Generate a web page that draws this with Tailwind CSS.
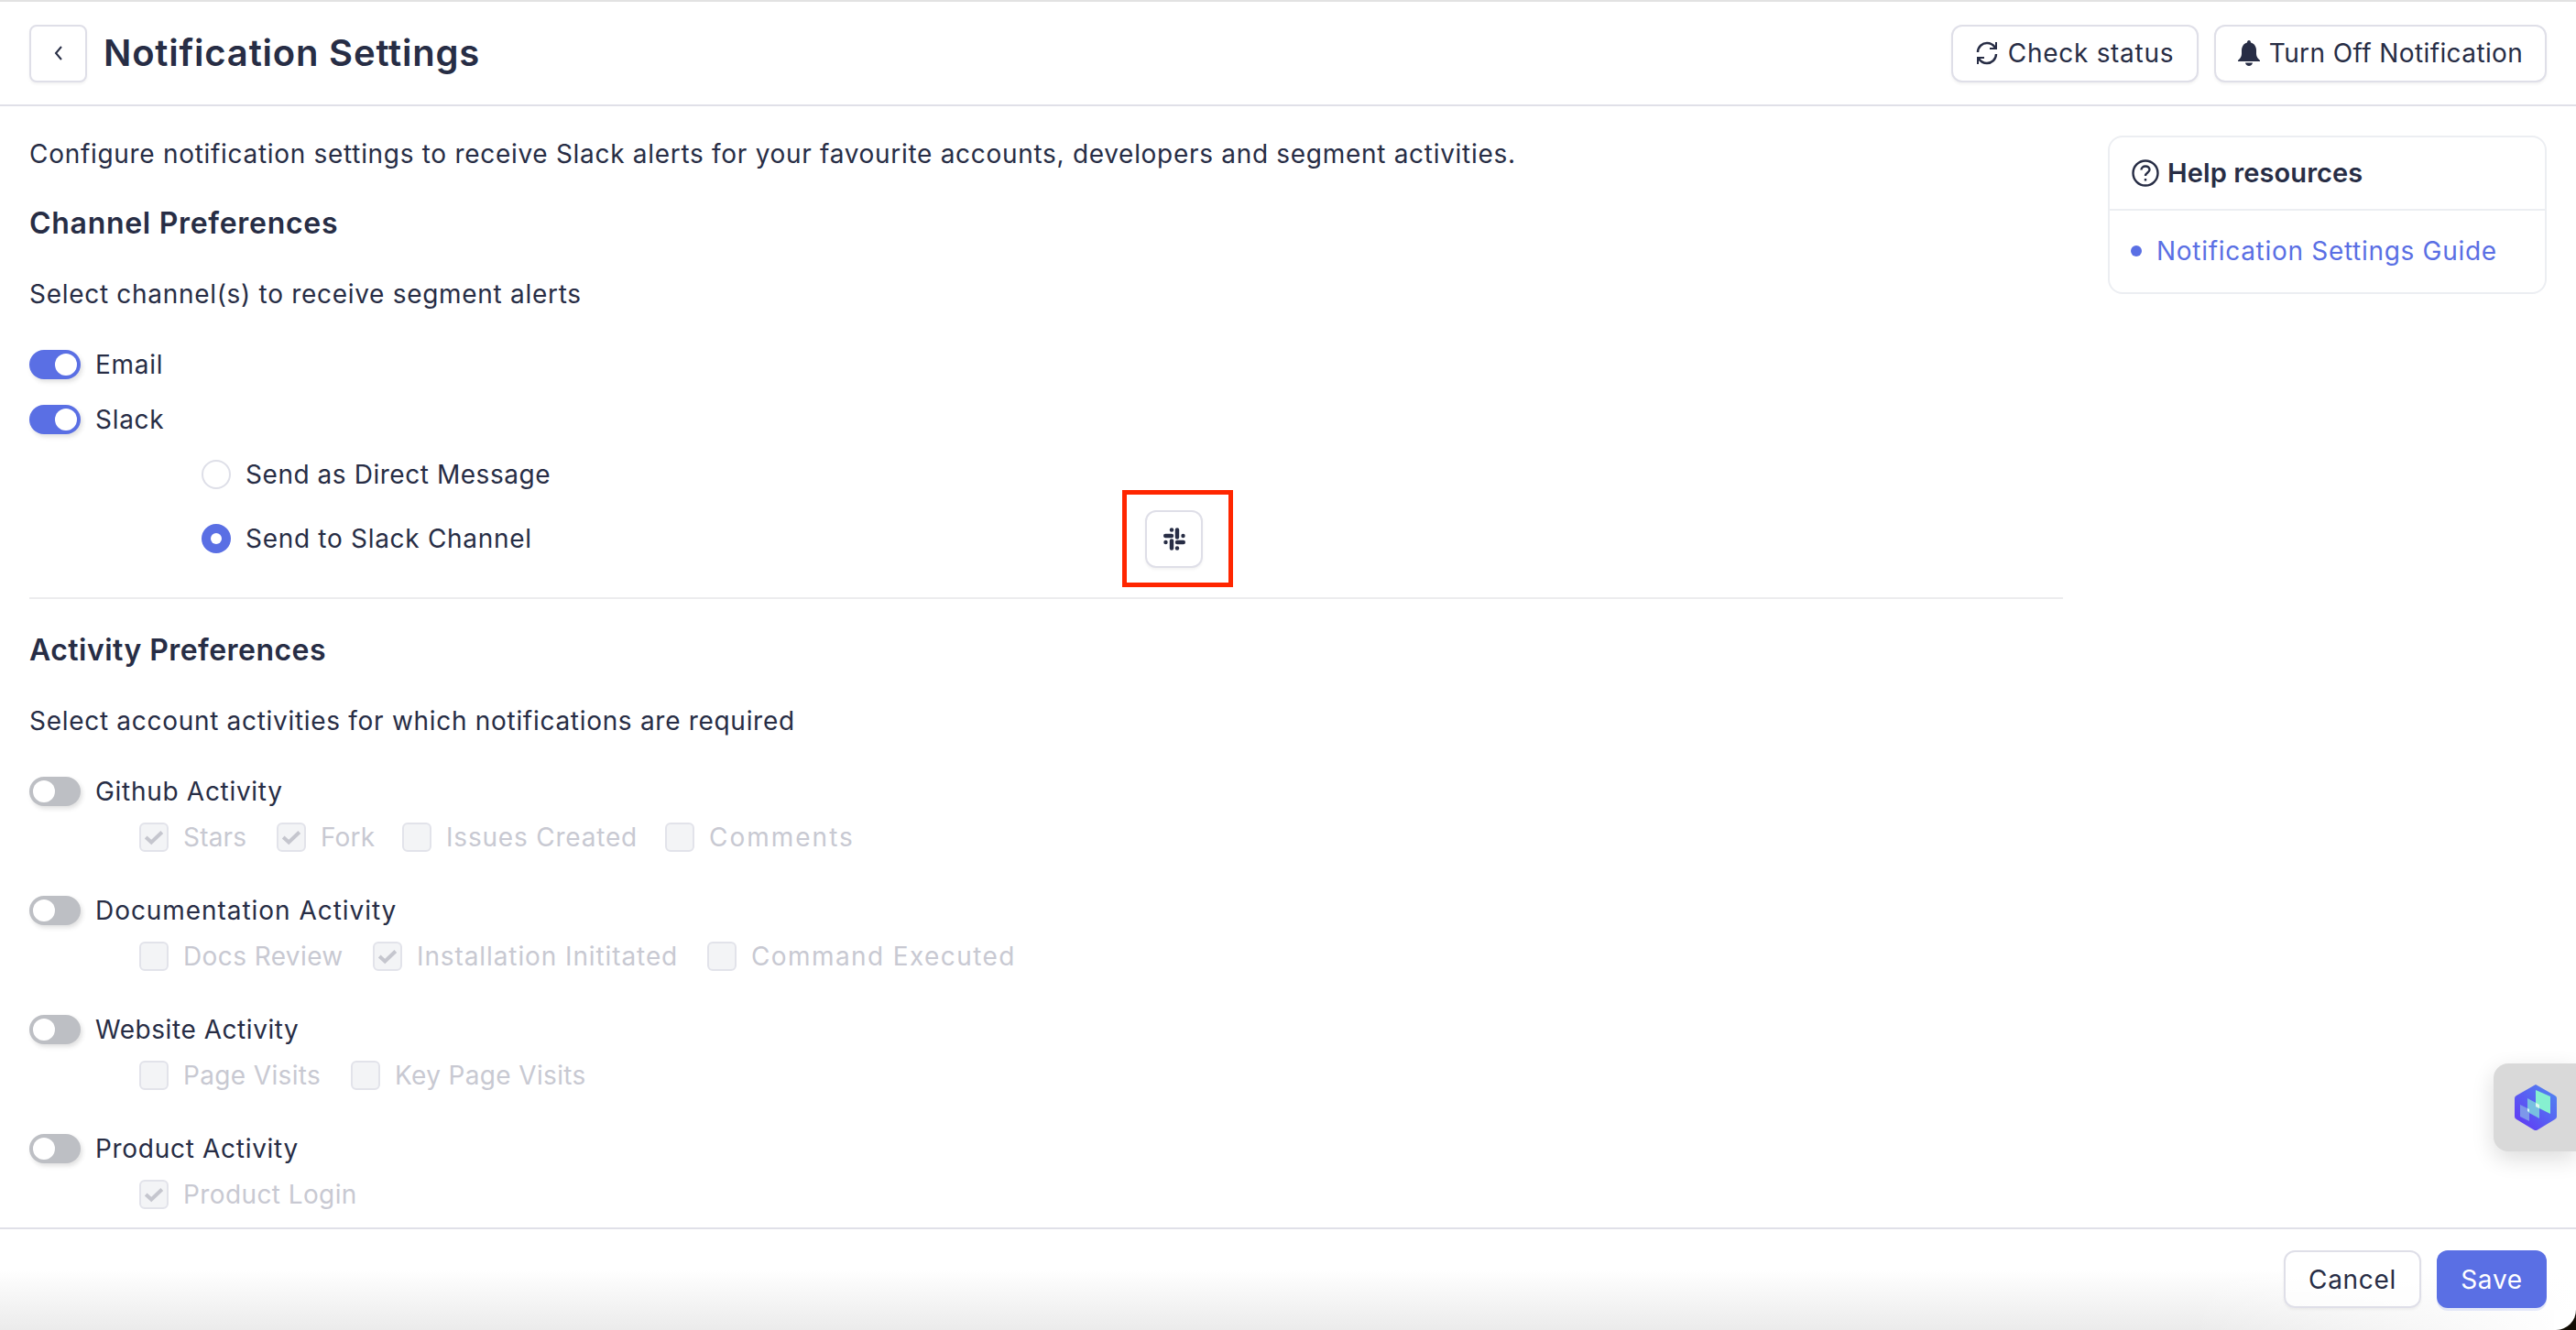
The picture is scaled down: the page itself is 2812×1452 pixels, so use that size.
<!DOCTYPE html>
<html lang="en">
<head>
    <meta charset="UTF-8">
    <title>Notification Settings</title>
    <script src="https://cdn.jsdelivr.net/npm/@tailwindcss/browser@4"></script>
</head>
<body class="bg-white font-[Inter,sans-serif] text-[#272d45] text-[28px] leading-[40px] tracking-[0.7px]">
<div class="relative h-[1452px] w-[2812px] overflow-hidden flex flex-col border-t-2 border-[#e2e2e2]">

    <!-- header -->
    <header class="h-[114px] shrink-0 flex items-center justify-between pl-8 pr-8 border-b-2 border-[#e0e0e8]">
        <div class="flex items-center gap-[18px]">
            <button class="w-[63px] h-[63px] flex items-center justify-center bg-white border-2 border-[#dfdfe8] rounded-lg shadow-[0_2px_3px_rgba(0,0,0,0.05)]">
                <svg class="w-4 h-5" viewBox="0 0 16 20" fill="none" stroke="#272d45" stroke-width="2"><path d="M11 3 L5 10 L11 17"/></svg>
            </button>
            <h1 class="text-[40px] font-semibold tracking-[0.8px]">Notification Settings</h1>
        </div>
        <div class="flex items-center gap-[17px]">
            <button class="w-[270px] h-[63px] flex items-center justify-center gap-[11px] bg-white border-2 border-[#dfdfe8] rounded-[12px] shadow-[0_2px_3px_rgba(0,0,0,0.05)]">
                <svg class="w-6 h-7" viewBox="0 0 24 28" fill="none" stroke="#272d45" stroke-width="2.4"><path d="M2 13 C2 7 7 3 12 3 C16 3 19 5 21 8"/><path d="M22 2 V9 H15" stroke-width="2"/><path d="M22 15 C22 21 17 25 12 25 C8 25 5 23 3 20"/><path d="M2 26 V19 H9" stroke-width="2"/></svg>
                <span>Check status</span>
            </button>
            <button class="w-[363px] h-[63px] flex items-center justify-center gap-[10px] bg-white border-2 border-[#dfdfe8] rounded-[12px] shadow-[0_2px_3px_rgba(0,0,0,0.05)]">
                <svg class="w-6 h-7" viewBox="0 0 24 28" fill="#272d45"><path d="M12 0 C13.4 0 14 1 14 2.4 C18 3.4 20 7 20 11 V15 C20 18 22 20 24 22 V23 H0 V22 C2 20 4 18 4 15 V11 C4 7 6 3.4 10 2.4 C10 1 10.6 0 12 0 Z"/><path d="M8 24.5 H16 C15.6 26.6 14 28 12 28 C10 28 8.4 26.6 8 24.5 Z"/></svg>
                <span class="tracking-[0.4px]">Turn Off Notification</span>
            </button>
        </div>
    </header>

    <!-- body -->
    <main class="relative h-[1224px] shrink-0 flex justify-between pl-8 pr-8">
        <div class="w-[2220px]">
            <p class="mt-8">Configure notification settings to receive Slack alerts for your favourite accounts, developers and segment activities.</p>
            <h2 class="mt-9 text-[32px] font-semibold tracking-[0.7px]">Channel Preferences</h2>
            <p class="mt-[37px]">Select channel(s) to receive segment alerts</p>

            <div class="mt-[41px] flex items-center gap-4 h-8">
                <span class="relative w-14 h-8 rounded-full bg-[#5a6fe4] shadow-[2px_3px_5px_rgba(0,0,0,0.12)]"><span class="absolute right-1 top-1 w-6 h-6 rounded-full bg-white"></span></span>
                <span>Email</span>
            </div>
            <div class="mt-7 flex items-center gap-4 h-8">
                <span class="relative w-14 h-8 rounded-full bg-[#5a6fe4] shadow-[2px_3px_5px_rgba(0,0,0,0.12)]"><span class="absolute right-1 top-1 w-6 h-6 rounded-full bg-white"></span></span>
                <span>Slack</span>
            </div>
            <div class="mt-7 ml-[188px] flex items-center gap-4 h-8">
                <span class="w-8 h-8 rounded-full bg-white border-2 border-[#dedfe8]"></span>
                <span class="tracking-[0.55px]">Send as Direct Message</span>
            </div>
            <div class="mt-[38px] ml-[188px] flex items-center h-8">
                <span class="w-8 h-8 rounded-full bg-[#5a6fe4] flex items-center justify-center"><span class="w-3 h-3 rounded-full bg-white"></span></span>
                <span class="ml-4 w-[982px]">Send to Slack Channel</span>
                <button class="w-[63px] h-[63px] shrink-0 flex items-center justify-center bg-white border-2 border-[#dfdfe8] rounded-[12px] shadow-[0_2px_3px_rgba(0,0,0,0.05)]">
                    <svg class="w-6 h-[25px]" viewBox="0 0 24 25" fill="none" stroke="#272d45" stroke-width="4.4" stroke-linecap="round"><path d="M2.2 9 H9"/><path d="M15 2.4 V10.5"/><path d="M15 16 H21.8"/><path d="M9 14.5 V22.6"/><path d="M9 2.5 H9.01"/><path d="M21.5 9 H21.51"/><path d="M2.5 16 H2.51"/><path d="M15 22.5 H15.01"/></svg>
                </button>
            </div>

            <div class="mt-[48px] h-0.5 bg-[#ececee]"></div>

            <h2 class="mt-9 text-[32px] font-semibold tracking-[0.45px]">Activity Preferences</h2>
            <p class="mt-[37px]">Select account activities for which notifications are required</p>

            <div class="mt-[41px] flex items-center gap-4 h-8">
                <span class="relative w-14 h-8 rounded-full bg-[#bdbfc4] shadow-[2px_3px_5px_rgba(0,0,0,0.12)]"><span class="absolute left-1 top-1 w-6 h-6 rounded-full bg-white"></span></span>
                <span>Github Activity</span>
            </div>
            <div class="mt-[18px] ml-[120px] flex items-center h-8 text-[#c8c9d2]">
                <label class="w-[150px] flex items-center gap-4 tracking-[0.2px]"><span class="w-8 h-8 rounded-md bg-[#f3f4f6] border-2 border-[#e2e3ea] flex items-center justify-center"><svg class="w-[22px] h-[22px]" viewBox="0 0 20 20" fill="none" stroke="#c5c6ce" stroke-width="3.6"><path d="M2 10 L7.5 15 L18 5"/></svg></span>Stars</label>
                <label class="w-[137px] flex items-center gap-4 tracking-[0.2px]"><span class="w-8 h-8 rounded-md bg-[#f3f4f6] border-2 border-[#e2e3ea] flex items-center justify-center"><svg class="w-[22px] h-[22px]" viewBox="0 0 20 20" fill="none" stroke="#c5c6ce" stroke-width="3.6"><path d="M2 10 L7.5 15 L18 5"/></svg></span>Fork</label>
                <label class="w-[287px] flex items-center gap-4 tracking-[0.8px]"><span class="w-8 h-8 rounded-md bg-[#f3f4f6] border-2 border-[#e2e3ea]"></span>Issues Created</label>
                <label class="flex items-center gap-4 tracking-[2px]"><span class="w-8 h-8 rounded-md bg-[#f3f4f6] border-2 border-[#e2e3ea]"></span>Comments</label>
            </div>

            <div class="mt-12 flex items-center gap-4 h-8">
                <span class="relative w-14 h-8 rounded-full bg-[#bdbfc4] shadow-[2px_3px_5px_rgba(0,0,0,0.12)]"><span class="absolute left-1 top-1 w-6 h-6 rounded-full bg-white"></span></span>
                <span class="tracking-[0.95px]">Documentation Activity</span>
            </div>
            <div class="mt-[18px] ml-[120px] flex items-center h-8 text-[#c8c9d2]">
                <label class="w-[255px] flex items-center gap-4 tracking-[0.4px]"><span class="w-8 h-8 rounded-md bg-[#f3f4f6] border-2 border-[#e2e3ea]"></span>Docs Review</label>
                <label class="w-[365px] flex items-center gap-4 tracking-[0.9px]"><span class="w-8 h-8 rounded-md bg-[#f3f4f6] border-2 border-[#e2e3ea] flex items-center justify-center"><svg class="w-[22px] h-[22px]" viewBox="0 0 20 20" fill="none" stroke="#c5c6ce" stroke-width="3.6"><path d="M2 10 L7.5 15 L18 5"/></svg></span>Installation Inititated</label>
                <label class="flex items-center gap-4 tracking-[1.4px]"><span class="w-8 h-8 rounded-md bg-[#f3f4f6] border-2 border-[#e2e3ea]"></span>Command Executed</label>
            </div>

            <div class="mt-12 flex items-center gap-4 h-8">
                <span class="relative w-14 h-8 rounded-full bg-[#bdbfc4] shadow-[2px_3px_5px_rgba(0,0,0,0.12)]"><span class="absolute left-1 top-1 w-6 h-6 rounded-full bg-white"></span></span>
                <span class="tracking-[0.55px]">Website Activity</span>
            </div>
            <div class="mt-[18px] ml-[120px] flex items-center h-8 text-[#c8c9d2]">
                <label class="w-[231px] flex items-center gap-4 tracking-[0.35px]"><span class="w-8 h-8 rounded-md bg-[#f3f4f6] border-2 border-[#e2e3ea]"></span>Page Visits</label>
                <label class="flex items-center gap-4 tracking-[0.35px]"><span class="w-8 h-8 rounded-md bg-[#f3f4f6] border-2 border-[#e2e3ea]"></span>Key Page Visits</label>
            </div>

            <div class="mt-12 flex items-center gap-4 h-8">
                <span class="relative w-14 h-8 rounded-full bg-[#bdbfc4] shadow-[2px_3px_5px_rgba(0,0,0,0.12)]"><span class="absolute left-1 top-1 w-6 h-6 rounded-full bg-white"></span></span>
                <span>Product Activity</span>
            </div>
            <div class="mt-[18px] ml-[120px] flex items-center h-8 text-[#c8c9d2]">
                <label class="flex items-center gap-4 tracking-[0.4px]"><span class="w-8 h-8 rounded-md bg-[#f3f4f6] border-2 border-[#e2e3ea] flex items-center justify-center"><svg class="w-[22px] h-[22px]" viewBox="0 0 20 20" fill="none" stroke="#c5c6ce" stroke-width="3.6"><path d="M2 10 L7.5 15 L18 5"/></svg></span>Product Login</label>
            </div>
        </div>

        <!-- help card -->
        <aside class="mt-8 w-[479px] h-[173px] rounded-[16px] border-2 border-[#eceef2] bg-white">
            <div class="h-[80px] flex items-center gap-[9px] pl-[24px] border-b-2 border-[#eceef2]">
                <svg class="w-[30px] h-[30px]" viewBox="0 0 30 30" fill="none" stroke="#272d45" stroke-width="2.4"><circle cx="15" cy="15" r="13.5"/><path d="M10.5 11.5 C10.5 9 12.5 7.5 15 7.5 C17.5 7.5 19.5 9 19.5 11.3 C19.5 14.5 15 14.5 15 18"/><path d="M15 21 V23.5"/></svg>
                <span class="text-[29px] font-semibold tracking-[0.1px]">Help resources</span>
            </div>
            <div class="flex items-center gap-[16px] pl-[23px] h-[88px] text-[#5a6fe4]">
                <span class="w-3 h-3 rounded-full bg-[#5a6fe4]"></span>
                <a>Notification Settings Guide</a>
            </div>
        </aside>
    </main>

    <!-- footer, the fade sits behind the buttons and dies out towards the right -->
    <footer class="relative flex-1 flex justify-end items-start gap-[17px] pt-[23px] pr-8 border-t-2 border-[#e0e0e8]">
        <div class="absolute bottom-0 left-0 right-0 h-[66px] bg-gradient-to-b from-transparent to-[#ebebeb]"></div>
        <div class="absolute bottom-0 right-0 w-[420px] h-[66px] bg-gradient-to-r from-transparent to-white"></div>
        <button class="relative w-[150px] h-[63px] bg-white/70 border-2 border-[#dfdfe8] rounded-[12px] shadow-[0_2px_3px_rgba(0,0,0,0.05)]">Cancel</button>
        <button class="relative w-[120px] h-[63px] bg-[#5a6fe4] text-white rounded-[12px] shadow-[0_3px_0_rgba(90,111,228,0.15)]">Save</button>
        <!-- window corner -->
        <div class="absolute bottom-0 right-0 w-6 h-[22px] bg-[#120c04]"><div class="w-full h-full bg-white rounded-br-[22px]"></div></div>
    </footer>

    <!-- red annotation box -->
    <div class="absolute left-[1225px] top-[533px] w-[121px] h-[106px] border-[5px] border-[#ff2600] pointer-events-none"></div>

    <!-- floating widget -->
    <div class="absolute right-0 top-[1159px] w-[90px] h-[96px] bg-[#d9d9d9] rounded-l-[16px] shadow-[0_8px_24px_rgba(0,0,0,0.14)] flex items-center pl-[23px]">
        <svg class="w-[46px] h-[52px]" viewBox="0 0 46 52">
            <defs><linearGradient id="hex" x1="0" y1="1" x2="1" y2="0"><stop offset="0" stop-color="#6233f5"/><stop offset="1" stop-color="#4f8bf0"/></linearGradient></defs>
            <path d="M23 1 L44 13 Q46 14 46 16 V36 Q46 38 44 39 L25 50.5 Q23 51.5 21 50.5 L2 39 Q0 38 0 36 V16 Q0 14 2 13 Z" fill="url(#hex)"/>
            <path d="M6 23 L16 28 V41 L6 36 Z" fill="#7d97ea"/>
            <path d="M14 16 L27 23 V38 L14 31 Z" fill="#78c0e0"/>
            <path d="M23 7 L39 14 V33 L23 25 Z" fill="#86f0d0"/>
            <path d="M14 27 L16 28 V31 L14 30 Z" fill="#dff5fb"/>
            <path d="M23 21 L27 23 V27 L23 25 Z" fill="#dff9f0"/>
        </svg>
    </div>
</div>
</body>
</html>
